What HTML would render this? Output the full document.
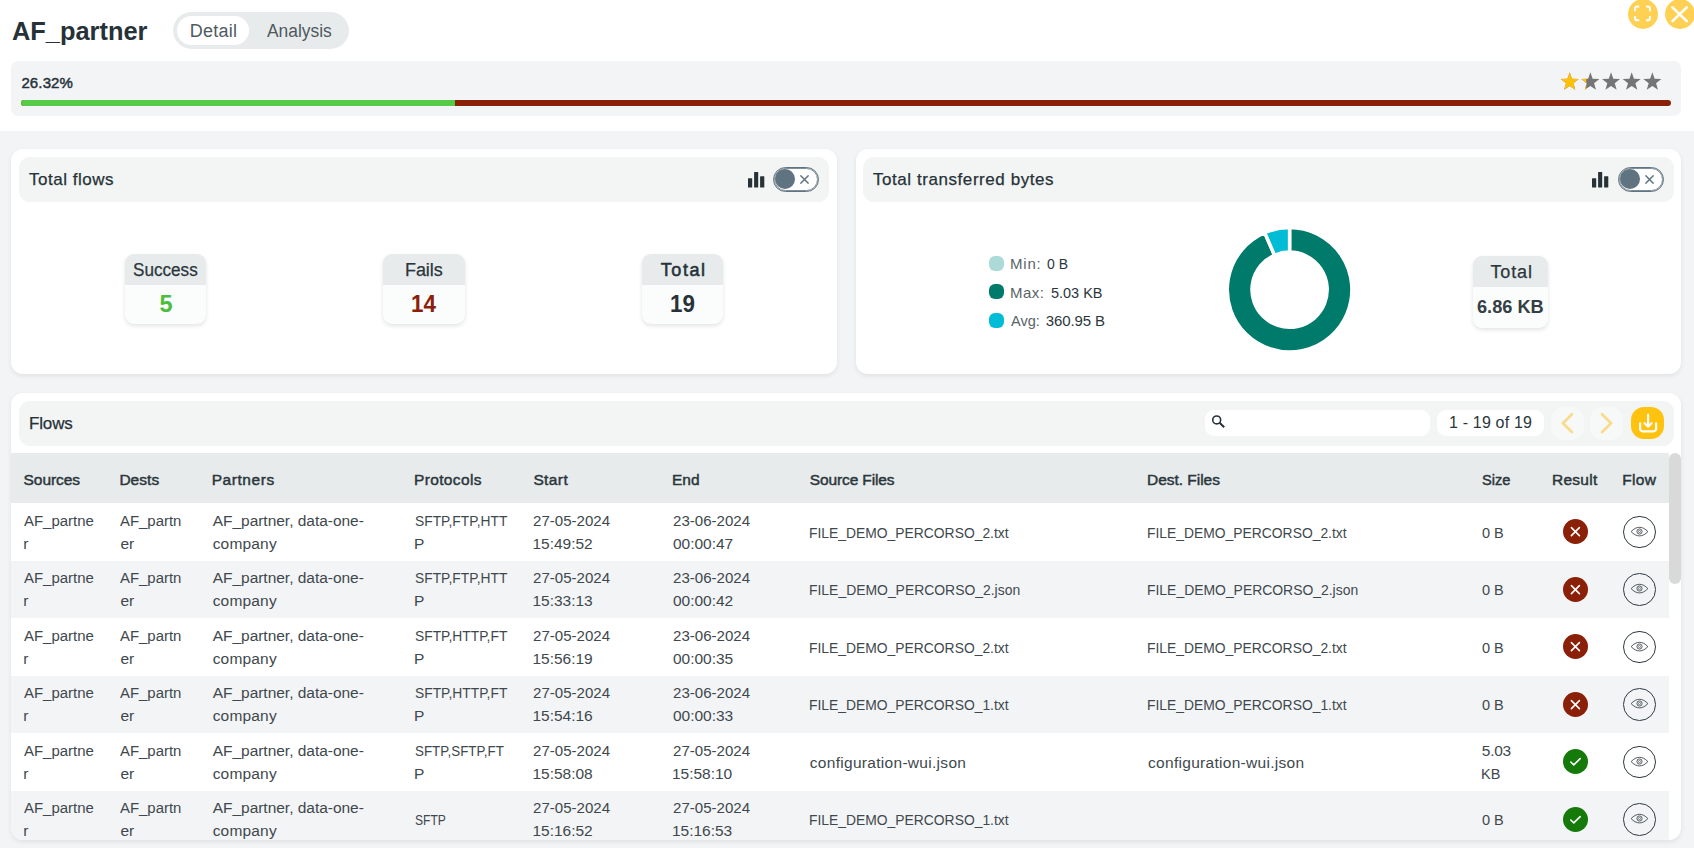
<!DOCTYPE html>
<html><head><meta charset="utf-8">
<style>
*{box-sizing:border-box;margin:0;padding:0}
html,body{width:1694px;height:848px;overflow:hidden;background:#fff}
body{font-family:"Liberation Sans",sans-serif;color:#2b363b;position:relative}
.abs{position:absolute}
.t{position:absolute;white-space:pre;line-height:1}
.card{position:absolute;background:#fff;border-radius:12px;box-shadow:0 2px 5px rgba(0,0,0,.08)}
.chead{position:absolute;background:#f3f4f4;border-radius:11px}
.stat{position:absolute;border-radius:9px;overflow:hidden;background:#fbfcfc;box-shadow:0 2px 4px rgba(0,0,0,.11)}
.stat .h{position:absolute;left:0;top:0;right:0;height:31px;background:#e8ebec}
</style></head>
<body>
<div class="abs" style="left:173px;top:12px;width:176px;height:37px;border-radius:19px;background:#e8ebec"></div>
<div class="abs" style="left:177px;top:16px;width:72px;height:29px;border-radius:15px;background:#fff"></div>
<div class="abs" style="left:1628px;top:-1.5px;width:30px;height:30px;border-radius:50%;background:#fed154"></div>
<svg class="abs" style="left:1628px;top:-1.5px" width="30" height="30" viewBox="0 0 30 30"><g fill="none" stroke="#fff" stroke-width="2" stroke-linecap="butt">
<path d="M7.07 12.2V9.46A2 2 0 0 1 9.07 7.46H11.2"/><path d="M18.1 7.46H19.93A2 2 0 0 1 21.93 9.46V12.2"/><path d="M21.93 17.1V19.3A2 2 0 0 1 19.93 21.3H18.1"/><path d="M11.2 21.3H9.07A2 2 0 0 1 7.07 19.3V17.1"/></g></svg>
<div class="abs" style="left:1665px;top:-1.5px;width:30px;height:30px;border-radius:50%;background:#fed154"></div>
<svg class="abs" style="left:1665px;top:-1.5px" width="30" height="30" viewBox="0 0 30 30"><g stroke="#fff" stroke-width="2.6" stroke-linecap="round"><path d="M7.44 8.4L21.75 22.1M21.75 8.4L7.44 22.1"/></g></svg>
<div class="abs" style="left:11px;top:61px;width:1670px;height:55px;border-radius:7px;background:#f3f4f6"></div>
<div class="abs" style="left:20px;top:99px;width:1652px;height:8px;border-radius:4px;background:#f8f9fa"></div>
<div class="abs" style="left:21px;top:100px;width:1650px;height:6px;border-radius:3px;background:#8b2009;overflow:hidden"><div style="width:434px;height:6px;background:#55cb48"></div></div>
<svg class="abs" style="left:1560px;top:72px;overflow:visible" width="105" height="19" viewBox="0 0 105 19"><defs><clipPath id="half"><rect x="0" y="0" width="4.9" height="19"/></clipPath></defs><g transform="translate(0.7 0.3)"><path transform="translate(0.00 0) scale(1.025 1.055)" d="M8.8 0 L11 6.1 L17.6 6.3 L12.4 10.3 L14.3 16.6 L8.8 12.9 L3.3 16.6 L5.2 10.3 L0 6.3 L6.6 6.1 Z" fill="#757575"/><path transform="translate(20.66 0) scale(1.025 1.055)" d="M8.8 0 L11 6.1 L17.6 6.3 L12.4 10.3 L14.3 16.6 L8.8 12.9 L3.3 16.6 L5.2 10.3 L0 6.3 L6.6 6.1 Z" fill="#757575"/><path transform="translate(41.32 0) scale(1.025 1.055)" d="M8.8 0 L11 6.1 L17.6 6.3 L12.4 10.3 L14.3 16.6 L8.8 12.9 L3.3 16.6 L5.2 10.3 L0 6.3 L6.6 6.1 Z" fill="#757575"/><path transform="translate(61.98 0) scale(1.025 1.055)" d="M8.8 0 L11 6.1 L17.6 6.3 L12.4 10.3 L14.3 16.6 L8.8 12.9 L3.3 16.6 L5.2 10.3 L0 6.3 L6.6 6.1 Z" fill="#757575"/><path transform="translate(82.64 0) scale(1.025 1.055)" d="M8.8 0 L11 6.1 L17.6 6.3 L12.4 10.3 L14.3 16.6 L8.8 12.9 L3.3 16.6 L5.2 10.3 L0 6.3 L6.6 6.1 Z" fill="#757575"/><path transform="scale(1.025 1.055)" d="M8.8 0 L11 6.1 L17.6 6.3 L12.4 10.3 L14.3 16.6 L8.8 12.9 L3.3 16.6 L5.2 10.3 L0 6.3 L6.6 6.1 Z" fill="#ffc107"/><g clip-path="url(#half)" transform="translate(20.66 0)"><path transform="scale(1.025 1.055)" d="M8.8 0 L11 6.1 L17.6 6.3 L12.4 10.3 L14.3 16.6 L8.8 12.9 L3.3 16.6 L5.2 10.3 L0 6.3 L6.6 6.1 Z" fill="#ffc107"/></g></g></svg>
<div class="abs" style="left:0;top:131px;width:1694px;height:717px;background:#f3f4f6"></div>
<div class="card" style="left:11px;top:149px;width:826px;height:225px"></div>
<div class="chead" style="left:19px;top:157px;width:810px;height:45px"></div>
<svg class="abs" style="left:748.1px;top:172px" width="17" height="16" viewBox="0 0 17 16"><g fill="#263238"><rect x="0" y="6.2" width="4.2" height="9.4" rx="0.5"/><rect x="6.1" y="0" width="4.1" height="15.6" rx="0.5"/><rect x="12.1" y="4.2" width="4.2" height="11.4" rx="0.5"/></g></svg>
<div class="abs" style="left:773px;top:167px;width:46px;height:25.3px;border-radius:13px;border:1px solid #5f7380;background:#fff"></div>
<div class="abs" style="left:774.4px;top:167.9px;width:43.2px;height:23.5px;border-radius:12px;border:1px solid rgba(95,115,128,.8)"></div>
<div class="abs" style="left:775.1px;top:169.1px;width:19.8px;height:19.8px;border-radius:50%;background:#5f7380"></div>
<svg class="abs" style="left:800px;top:175px" width="9" height="9" viewBox="0 0 9 9"><path d="M0.4 0.4L8.6 8.6M8.6 0.4L0.4 8.6" stroke="#5f7380" stroke-width="1.5"/></svg>
<div class="card" style="left:856px;top:149px;width:825px;height:225px"></div>
<div class="chead" style="left:863px;top:157px;width:811px;height:45px"></div>
<svg class="abs" style="left:1592.1px;top:172px" width="17" height="16" viewBox="0 0 17 16"><g fill="#263238"><rect x="0" y="6.2" width="4.2" height="9.4" rx="0.5"/><rect x="6.1" y="0" width="4.1" height="15.6" rx="0.5"/><rect x="12.1" y="4.2" width="4.2" height="11.4" rx="0.5"/></g></svg>
<div class="abs" style="left:1618px;top:167px;width:46px;height:25.3px;border-radius:13px;border:1px solid #5f7380;background:#fff"></div>
<div class="abs" style="left:1619.4px;top:167.9px;width:43.2px;height:23.5px;border-radius:12px;border:1px solid rgba(95,115,128,.8)"></div>
<div class="abs" style="left:1620.1px;top:169.1px;width:19.8px;height:19.8px;border-radius:50%;background:#5f7380"></div>
<svg class="abs" style="left:1645px;top:175px" width="9" height="9" viewBox="0 0 9 9"><path d="M0.4 0.4L8.6 8.6M8.6 0.4L0.4 8.6" stroke="#5f7380" stroke-width="1.5"/></svg>
<div class="stat" style="left:125px;top:254px;width:81px;height:70px"><div class="h"></div></div>
<div class="stat" style="left:383px;top:254px;width:82px;height:70px"><div class="h"></div></div>
<div class="stat" style="left:642px;top:254px;width:81px;height:70px"><div class="h"></div></div>
<div class="abs" style="left:989px;top:255.9px;width:15px;height:15px;border-radius:6px;background:#abdad8"></div>
<div class="abs" style="left:989px;top:283.9px;width:15px;height:15px;border-radius:6px;background:#007a6a"></div>
<div class="abs" style="left:989px;top:312.9px;width:15px;height:15px;border-radius:6px;background:#00bcd4"></div>
<svg class="abs" style="left:1160px;top:220px" width="260" height="140" viewBox="0 0 260 140"><path d="M129.60 7.40A62.3 62.3 0 1 1 104.66 12.61L114.55 35.24A37.6 37.6 0 1 0 129.60 32.10Z" fill="#007a6a" stroke="#fff" stroke-width="3.5" stroke-linejoin="miter"/><path d="M104.66 12.61A62.3 62.3 0 0 1 129.60 7.40L129.60 32.10A37.6 37.6 0 0 0 114.55 35.24Z" fill="#00bcd4" stroke="#fff" stroke-width="3.5" stroke-linejoin="miter"/></svg>
<div class="stat" style="left:1473px;top:256px;width:75px;height:72px"><div class="h"></div></div>
<div class="card" style="left:11px;top:393px;width:1670px;height:447px;overflow:hidden">
<div class="chead" style="left:8px;top:8px;width:1655px;height:45px"></div>
</div>
<div class="abs" style="left:1205px;top:410px;width:225px;height:26px;border-radius:9px;background:#fff"></div>
<svg class="abs" style="left:1211px;top:414px" width="16" height="16" viewBox="0 0 16 16"><circle cx="5.7" cy="5.9" r="3.95" fill="none" stroke="#263238" stroke-width="1.6"/><path d="M8.6 8.8L13.2 13.2" stroke="#263238" stroke-width="2" stroke-linecap="butt"/></svg>
<div class="abs" style="left:1437px;top:410px;width:107px;height:26px;border-radius:9px;background:#fff"></div>
<div class="abs" style="left:1551px;top:407px;width:33px;height:33px;border-radius:13px;background:#f7f8f8"></div>
<div class="abs" style="left:1590px;top:407px;width:33px;height:33px;border-radius:13px;background:#f7f8f8"></div>
<svg class="abs" style="left:1551px;top:407px" width="33" height="33" viewBox="0 0 33 33"><path d="M20.9 7.3L11.9 16.2L20.9 25.1" fill="none" stroke="#f8dc8d" stroke-width="2.8" stroke-linecap="round" stroke-linejoin="round"/></svg>
<svg class="abs" style="left:1590px;top:407px" width="33" height="33" viewBox="0 0 33 33"><path d="M12.1 7.3L21.1 16.2L12.1 25.1" fill="none" stroke="#f8dc8d" stroke-width="2.8" stroke-linecap="round" stroke-linejoin="round"/></svg>
<div class="abs" style="left:1631px;top:407px;width:33px;height:32px;border-radius:13px;background:#fec20f"></div>
<svg class="abs" style="left:1631px;top:407px" width="33" height="32" viewBox="0 0 33 32"><g fill="none" stroke="#fff" stroke-width="2.2" stroke-linecap="round" stroke-linejoin="round"><path d="M17.1 7.7V19.3M13.6 16.2L17.1 19.7L20.6 16.2"/><path d="M9.1 16.3V21.8A2.5 2.5 0 0 0 11.6 24.3H22.6A2.5 2.5 0 0 0 25.1 21.8V16.3"/></g></svg>
<div class="abs" style="left:11px;top:452.5px;width:1658px;height:50.5px;background:#e8ebec"></div>
<div class="abs" style="left:11px;top:503px;width:1658px;height:337px;overflow:hidden;border-bottom-left-radius:12px">
<div class="abs" style="left:0;top:0.0px;width:1658px;height:57.5px;background:#fff"></div>
<div class="abs" style="left:0;top:57.5px;width:1658px;height:57.5px;background:#f3f4f6"></div>
<div class="abs" style="left:0;top:115.0px;width:1658px;height:57.5px;background:#fff"></div>
<div class="abs" style="left:0;top:172.5px;width:1658px;height:57.5px;background:#f3f4f6"></div>
<div class="abs" style="left:0;top:230.0px;width:1658px;height:57.5px;background:#fff"></div>
<div class="abs" style="left:0;top:287.5px;width:1658px;height:57.5px;background:#f3f4f6"></div>
</div>
<div class="abs" style="left:11px;top:503px;width:1670px;height:337px;overflow:hidden" id="rowclip">
</div>
<div class="abs" style="left:1563px;top:519.3px;width:25px;height:25px;border-radius:50%;background:#8b2009"></div>
<svg class="abs" style="left:1563px;top:519.3px" width="25" height="25" viewBox="0 0 25 25"><path d="M8.4 8.6L16.4 16.6M16.4 8.6L8.4 16.6" stroke="#fff" stroke-width="1.6" stroke-linecap="round"/></svg>
<div class="abs" style="left:1623.2px;top:515.9px;width:32.6px;height:32.6px;border-radius:50%;border:1.1px solid #2f3a3f"></div>
<svg class="abs" style="left:1623px;top:515.6px" width="33" height="33" viewBox="0 0 33 33"><path d="M8.1 15.6C10.9 12.7 13.6 11.3 16.5 11.3S22.1 12.7 24.9 15.6C22.1 18.5 19.4 19.9 16.5 19.9S10.9 18.5 8.1 15.6Z" fill="none" stroke="#2f3a3f" stroke-width="0.85"/><circle cx="16.5" cy="15.5" r="2.6" fill="none" stroke="#2f3a3f" stroke-width="0.8"/><circle cx="16.5" cy="15.5" r="1.1" fill="none" stroke="#2f3a3f" stroke-width="0.6"/></svg>
<div class="abs" style="left:1563px;top:576.8px;width:25px;height:25px;border-radius:50%;background:#8b2009"></div>
<svg class="abs" style="left:1563px;top:576.8px" width="25" height="25" viewBox="0 0 25 25"><path d="M8.4 8.6L16.4 16.6M16.4 8.6L8.4 16.6" stroke="#fff" stroke-width="1.6" stroke-linecap="round"/></svg>
<div class="abs" style="left:1623.2px;top:573.4px;width:32.6px;height:32.6px;border-radius:50%;border:1.1px solid #2f3a3f"></div>
<svg class="abs" style="left:1623px;top:573.1px" width="33" height="33" viewBox="0 0 33 33"><path d="M8.1 15.6C10.9 12.7 13.6 11.3 16.5 11.3S22.1 12.7 24.9 15.6C22.1 18.5 19.4 19.9 16.5 19.9S10.9 18.5 8.1 15.6Z" fill="none" stroke="#2f3a3f" stroke-width="0.85"/><circle cx="16.5" cy="15.5" r="2.6" fill="none" stroke="#2f3a3f" stroke-width="0.8"/><circle cx="16.5" cy="15.5" r="1.1" fill="none" stroke="#2f3a3f" stroke-width="0.6"/></svg>
<div class="abs" style="left:1563px;top:634.3px;width:25px;height:25px;border-radius:50%;background:#8b2009"></div>
<svg class="abs" style="left:1563px;top:634.3px" width="25" height="25" viewBox="0 0 25 25"><path d="M8.4 8.6L16.4 16.6M16.4 8.6L8.4 16.6" stroke="#fff" stroke-width="1.6" stroke-linecap="round"/></svg>
<div class="abs" style="left:1623.2px;top:630.9px;width:32.6px;height:32.6px;border-radius:50%;border:1.1px solid #2f3a3f"></div>
<svg class="abs" style="left:1623px;top:630.6px" width="33" height="33" viewBox="0 0 33 33"><path d="M8.1 15.6C10.9 12.7 13.6 11.3 16.5 11.3S22.1 12.7 24.9 15.6C22.1 18.5 19.4 19.9 16.5 19.9S10.9 18.5 8.1 15.6Z" fill="none" stroke="#2f3a3f" stroke-width="0.85"/><circle cx="16.5" cy="15.5" r="2.6" fill="none" stroke="#2f3a3f" stroke-width="0.8"/><circle cx="16.5" cy="15.5" r="1.1" fill="none" stroke="#2f3a3f" stroke-width="0.6"/></svg>
<div class="abs" style="left:1563px;top:691.8px;width:25px;height:25px;border-radius:50%;background:#8b2009"></div>
<svg class="abs" style="left:1563px;top:691.8px" width="25" height="25" viewBox="0 0 25 25"><path d="M8.4 8.6L16.4 16.6M16.4 8.6L8.4 16.6" stroke="#fff" stroke-width="1.6" stroke-linecap="round"/></svg>
<div class="abs" style="left:1623.2px;top:688.4px;width:32.6px;height:32.6px;border-radius:50%;border:1.1px solid #2f3a3f"></div>
<svg class="abs" style="left:1623px;top:688.1px" width="33" height="33" viewBox="0 0 33 33"><path d="M8.1 15.6C10.9 12.7 13.6 11.3 16.5 11.3S22.1 12.7 24.9 15.6C22.1 18.5 19.4 19.9 16.5 19.9S10.9 18.5 8.1 15.6Z" fill="none" stroke="#2f3a3f" stroke-width="0.85"/><circle cx="16.5" cy="15.5" r="2.6" fill="none" stroke="#2f3a3f" stroke-width="0.8"/><circle cx="16.5" cy="15.5" r="1.1" fill="none" stroke="#2f3a3f" stroke-width="0.6"/></svg>
<div class="abs" style="left:1563px;top:749.3px;width:25px;height:25px;border-radius:50%;background:#167a0b"></div>
<svg class="abs" style="left:1563px;top:749.3px" width="25" height="25" viewBox="0 0 25 25"><path d="M7.8 13L10.8 15.9L17.2 9.6" fill="none" stroke="#fff" stroke-width="1.6" stroke-linecap="round" stroke-linejoin="round"/></svg>
<div class="abs" style="left:1623.2px;top:745.9px;width:32.6px;height:32.6px;border-radius:50%;border:1.1px solid #2f3a3f"></div>
<svg class="abs" style="left:1623px;top:745.6px" width="33" height="33" viewBox="0 0 33 33"><path d="M8.1 15.6C10.9 12.7 13.6 11.3 16.5 11.3S22.1 12.7 24.9 15.6C22.1 18.5 19.4 19.9 16.5 19.9S10.9 18.5 8.1 15.6Z" fill="none" stroke="#2f3a3f" stroke-width="0.85"/><circle cx="16.5" cy="15.5" r="2.6" fill="none" stroke="#2f3a3f" stroke-width="0.8"/><circle cx="16.5" cy="15.5" r="1.1" fill="none" stroke="#2f3a3f" stroke-width="0.6"/></svg>
<div class="abs" style="left:1563px;top:806.8px;width:25px;height:25px;border-radius:50%;background:#167a0b"></div>
<svg class="abs" style="left:1563px;top:806.8px" width="25" height="25" viewBox="0 0 25 25"><path d="M7.8 13L10.8 15.9L17.2 9.6" fill="none" stroke="#fff" stroke-width="1.6" stroke-linecap="round" stroke-linejoin="round"/></svg>
<div class="abs" style="left:1623.2px;top:803.4px;width:32.6px;height:32.6px;border-radius:50%;border:1.1px solid #2f3a3f"></div>
<svg class="abs" style="left:1623px;top:803.1px" width="33" height="33" viewBox="0 0 33 33"><path d="M8.1 15.6C10.9 12.7 13.6 11.3 16.5 11.3S22.1 12.7 24.9 15.6C22.1 18.5 19.4 19.9 16.5 19.9S10.9 18.5 8.1 15.6Z" fill="none" stroke="#2f3a3f" stroke-width="0.85"/><circle cx="16.5" cy="15.5" r="2.6" fill="none" stroke="#2f3a3f" stroke-width="0.8"/><circle cx="16.5" cy="15.5" r="1.1" fill="none" stroke="#2f3a3f" stroke-width="0.6"/></svg>
<div class="abs" style="left:1669px;top:453px;width:11.8px;height:130.5px;border-radius:6px;background:#d9d9d9"></div>
<div class="t" style="left:11.70px;top:17.99px;font-size:26px;color:#263238;font-weight:700;transform:scaleX(0.9763);transform-origin:0 0">AF_partner</div>
<div class="t" style="left:189.70px;top:21.66px;font-size:18px;color:#4f5a5f;letter-spacing:0.236px">Detail</div>
<div class="t" style="left:267.20px;top:21.66px;font-size:18px;color:#4f5a5f;transform:scaleX(0.9668);transform-origin:0 0">Analysis</div>
<div class="t" style="left:21.40px;top:75.30px;font-size:15px;color:#263238;-webkit-text-stroke:0.45px #263238;letter-spacing:0.133px">26.32%</div>
<div class="t" style="left:29.00px;top:171.11px;font-size:17px;color:#263238;-webkit-text-stroke:0.25px #263238;letter-spacing:0.514px">Total flows</div>
<div class="t" style="left:873.00px;top:171.01px;font-size:17px;color:#263238;-webkit-text-stroke:0.25px #263238;letter-spacing:0.560px">Total transferred bytes</div>
<div class="t" style="left:133.30px;top:260.56px;font-size:18px;color:#2b363b;-webkit-text-stroke:0.25px #2b363b;transform:scaleX(0.9511);transform-origin:0 0">Success</div>
<div class="t" style="left:159.60px;top:292.51px;font-size:23.5px;color:#4cbe3f;font-weight:700">5</div>
<div class="t" style="left:405.00px;top:260.56px;font-size:18px;color:#2b363b;-webkit-text-stroke:0.25px #2b363b;letter-spacing:-0.076px">Fails</div>
<div class="t" style="left:411.47px;top:292.08px;font-size:24px;color:#8b2009;font-weight:700;transform:scaleX(0.9337);transform-origin:0 0">14</div>
<div class="t" style="left:660.80px;top:260.56px;font-size:18px;color:#263238;-webkit-text-stroke:0.54px #263238;letter-spacing:1.569px">Total</div>
<div class="t" style="left:670.47px;top:292.08px;font-size:24px;color:#263238;font-weight:700;transform:scaleX(0.9311);transform-origin:0 0">19</div>
<div class="t" style="left:1010.00px;top:256.30px;font-size:15px;color:#5a6469;letter-spacing:0.777px">Min:</div>
<div class="t" style="left:1047.00px;top:256.30px;font-size:15px;color:#2b363b;transform:scaleX(0.9329);transform-origin:0 0">0 B</div>
<div class="t" style="left:1010.00px;top:285.10px;font-size:15px;color:#5a6469;letter-spacing:0.488px">Max:</div>
<div class="t" style="left:1050.50px;top:285.10px;font-size:15px;color:#2b363b;transform:scaleX(0.9650);transform-origin:0 0">5.03 KB</div>
<div class="t" style="left:1011.00px;top:312.80px;font-size:15px;color:#5a6469;transform:scaleX(0.9693);transform-origin:0 0">Avg:</div>
<div class="t" style="left:1045.80px;top:312.80px;font-size:15px;color:#2b363b;letter-spacing:-0.121px">360.95 B</div>
<div class="t" style="left:1490.50px;top:262.76px;font-size:18px;color:#2b363b;-webkit-text-stroke:0.25px #2b363b;letter-spacing:0.869px">Total</div>
<div class="t" style="left:1477.40px;top:297.42px;font-size:19px;color:#343f44;font-weight:700;transform:scaleX(0.9568);transform-origin:0 0">6.86 KB</div>
<div class="t" style="left:28.90px;top:415.01px;font-size:17px;color:#263238;-webkit-text-stroke:0.25px #263238;letter-spacing:-0.123px">Flows</div>
<div class="t" style="left:1449.00px;top:414.96px;font-size:16px;color:#2b363b;letter-spacing:0.178px">1 - 19 of 19</div>
<div class="t" style="left:23.60px;top:471.88px;font-size:15.5px;color:#2b363b;-webkit-text-stroke:0.46px #2b363b;letter-spacing:-0.069px">Sources</div>
<div class="t" style="left:119.40px;top:471.88px;font-size:15.5px;color:#2b363b;-webkit-text-stroke:0.46px #2b363b;letter-spacing:0.032px">Dests</div>
<div class="t" style="left:211.70px;top:471.88px;font-size:15.5px;color:#2b363b;-webkit-text-stroke:0.46px #2b363b;letter-spacing:0.553px">Partners</div>
<div class="t" style="left:414.00px;top:471.88px;font-size:15.5px;color:#2b363b;-webkit-text-stroke:0.46px #2b363b;letter-spacing:0.355px">Protocols</div>
<div class="t" style="left:533.40px;top:471.88px;font-size:15.5px;color:#2b363b;-webkit-text-stroke:0.46px #2b363b;letter-spacing:0.393px">Start</div>
<div class="t" style="left:671.90px;top:471.88px;font-size:15.5px;color:#2b363b;-webkit-text-stroke:0.46px #2b363b;letter-spacing:0.021px">End</div>
<div class="t" style="left:809.80px;top:471.88px;font-size:15.5px;color:#2b363b;-webkit-text-stroke:0.46px #2b363b;letter-spacing:-0.127px">Source Files</div>
<div class="t" style="left:1147.00px;top:471.88px;font-size:15.5px;color:#2b363b;-webkit-text-stroke:0.46px #2b363b;letter-spacing:-0.026px">Dest. Files</div>
<div class="t" style="left:1481.80px;top:471.88px;font-size:15.5px;color:#2b363b;-webkit-text-stroke:0.46px #2b363b;transform:scaleX(0.9447);transform-origin:0 0">Size</div>
<div class="t" style="left:1552.00px;top:471.88px;font-size:15.5px;color:#2b363b;-webkit-text-stroke:0.46px #2b363b;letter-spacing:0.254px">Result</div>
<div class="t" style="left:1622.30px;top:471.88px;font-size:15.5px;color:#2b363b;-webkit-text-stroke:0.46px #2b363b;letter-spacing:0.289px">Flow</div>
<div class="t" style="left:23.60px;top:512.98px;font-size:15.5px;color:#3e484d;transform:scaleX(0.9644);transform-origin:0 0">AF_partne</div>
<div class="t" style="left:23.30px;top:535.98px;font-size:15.5px;color:#3e484d">r</div>
<div class="t" style="left:120.40px;top:512.98px;font-size:15.5px;color:#3e484d;transform:scaleX(0.9630);transform-origin:0 0">AF_partn</div>
<div class="t" style="left:120.40px;top:535.98px;font-size:15.5px;color:#3e484d">er</div>
<div class="t" style="left:212.70px;top:512.98px;font-size:15.5px;color:#3e484d;letter-spacing:-0.024px">AF_partner, data-one-</div>
<div class="t" style="left:212.70px;top:535.98px;font-size:15.5px;color:#3e484d;letter-spacing:0.176px">company</div>
<div class="t" style="left:415.00px;top:512.98px;font-size:15.5px;color:#3e484d;transform:scaleX(0.8909);transform-origin:0 0">SFTP,FTP,HTT</div>
<div class="t" style="left:414.00px;top:535.98px;font-size:15.5px;color:#3e484d">P</div>
<div class="t" style="left:533.40px;top:512.98px;font-size:15.5px;color:#3e484d;transform:scaleX(0.9716);transform-origin:0 0">27-05-2024</div>
<div class="t" style="left:532.40px;top:535.98px;font-size:15.5px;color:#3e484d">15:49:52</div>
<div class="t" style="left:672.90px;top:512.98px;font-size:15.5px;color:#3e484d;transform:scaleX(0.9716);transform-origin:0 0">23-06-2024</div>
<div class="t" style="left:672.90px;top:535.98px;font-size:15.5px;color:#3e484d">00:00:47</div>
<div class="t" style="left:808.91px;top:524.68px;font-size:15.5px;color:#3e484d;transform:scaleX(0.8946);transform-origin:0 0">FILE_DEMO_PERCORSO_2.txt</div>
<div class="t" style="left:1147.11px;top:524.68px;font-size:15.5px;color:#3e484d;transform:scaleX(0.8946);transform-origin:0 0">FILE_DEMO_PERCORSO_2.txt</div>
<div class="t" style="left:1482.40px;top:524.68px;font-size:15.5px;color:#3e484d;transform:scaleX(0.9378);transform-origin:0 0">0 B</div>
<div class="t" style="left:23.60px;top:570.48px;font-size:15.5px;color:#3e484d;transform:scaleX(0.9644);transform-origin:0 0">AF_partne</div>
<div class="t" style="left:23.30px;top:593.48px;font-size:15.5px;color:#3e484d">r</div>
<div class="t" style="left:120.40px;top:570.48px;font-size:15.5px;color:#3e484d;transform:scaleX(0.9630);transform-origin:0 0">AF_partn</div>
<div class="t" style="left:120.40px;top:593.48px;font-size:15.5px;color:#3e484d">er</div>
<div class="t" style="left:212.70px;top:570.48px;font-size:15.5px;color:#3e484d;letter-spacing:-0.024px">AF_partner, data-one-</div>
<div class="t" style="left:212.70px;top:593.48px;font-size:15.5px;color:#3e484d;letter-spacing:0.176px">company</div>
<div class="t" style="left:415.00px;top:570.48px;font-size:15.5px;color:#3e484d;transform:scaleX(0.8909);transform-origin:0 0">SFTP,FTP,HTT</div>
<div class="t" style="left:414.00px;top:593.48px;font-size:15.5px;color:#3e484d">P</div>
<div class="t" style="left:533.40px;top:570.48px;font-size:15.5px;color:#3e484d;transform:scaleX(0.9716);transform-origin:0 0">27-05-2024</div>
<div class="t" style="left:532.40px;top:593.48px;font-size:15.5px;color:#3e484d">15:33:13</div>
<div class="t" style="left:672.90px;top:570.48px;font-size:15.5px;color:#3e484d;transform:scaleX(0.9716);transform-origin:0 0">23-06-2024</div>
<div class="t" style="left:672.90px;top:593.48px;font-size:15.5px;color:#3e484d">00:00:42</div>
<div class="t" style="left:808.90px;top:582.18px;font-size:15.5px;color:#3e484d;transform:scaleX(0.8979);transform-origin:0 0">FILE_DEMO_PERCORSO_2.json</div>
<div class="t" style="left:1147.10px;top:582.18px;font-size:15.5px;color:#3e484d;transform:scaleX(0.8979);transform-origin:0 0">FILE_DEMO_PERCORSO_2.json</div>
<div class="t" style="left:1482.40px;top:582.18px;font-size:15.5px;color:#3e484d;transform:scaleX(0.9378);transform-origin:0 0">0 B</div>
<div class="t" style="left:23.60px;top:627.98px;font-size:15.5px;color:#3e484d;transform:scaleX(0.9644);transform-origin:0 0">AF_partne</div>
<div class="t" style="left:23.30px;top:650.98px;font-size:15.5px;color:#3e484d">r</div>
<div class="t" style="left:120.40px;top:627.98px;font-size:15.5px;color:#3e484d;transform:scaleX(0.9630);transform-origin:0 0">AF_partn</div>
<div class="t" style="left:120.40px;top:650.98px;font-size:15.5px;color:#3e484d">er</div>
<div class="t" style="left:212.70px;top:627.98px;font-size:15.5px;color:#3e484d;letter-spacing:-0.024px">AF_partner, data-one-</div>
<div class="t" style="left:212.70px;top:650.98px;font-size:15.5px;color:#3e484d;letter-spacing:0.176px">company</div>
<div class="t" style="left:415.00px;top:627.98px;font-size:15.5px;color:#3e484d;transform:scaleX(0.8909);transform-origin:0 0">SFTP,HTTP,FT</div>
<div class="t" style="left:414.00px;top:650.98px;font-size:15.5px;color:#3e484d">P</div>
<div class="t" style="left:533.40px;top:627.98px;font-size:15.5px;color:#3e484d;transform:scaleX(0.9716);transform-origin:0 0">27-05-2024</div>
<div class="t" style="left:532.40px;top:650.98px;font-size:15.5px;color:#3e484d">15:56:19</div>
<div class="t" style="left:672.90px;top:627.98px;font-size:15.5px;color:#3e484d;transform:scaleX(0.9716);transform-origin:0 0">23-06-2024</div>
<div class="t" style="left:672.90px;top:650.98px;font-size:15.5px;color:#3e484d">00:00:35</div>
<div class="t" style="left:808.91px;top:639.68px;font-size:15.5px;color:#3e484d;transform:scaleX(0.8946);transform-origin:0 0">FILE_DEMO_PERCORSO_2.txt</div>
<div class="t" style="left:1147.11px;top:639.68px;font-size:15.5px;color:#3e484d;transform:scaleX(0.8946);transform-origin:0 0">FILE_DEMO_PERCORSO_2.txt</div>
<div class="t" style="left:1482.40px;top:639.68px;font-size:15.5px;color:#3e484d;transform:scaleX(0.9378);transform-origin:0 0">0 B</div>
<div class="t" style="left:23.60px;top:685.48px;font-size:15.5px;color:#3e484d;transform:scaleX(0.9644);transform-origin:0 0">AF_partne</div>
<div class="t" style="left:23.30px;top:708.48px;font-size:15.5px;color:#3e484d">r</div>
<div class="t" style="left:120.40px;top:685.48px;font-size:15.5px;color:#3e484d;transform:scaleX(0.9630);transform-origin:0 0">AF_partn</div>
<div class="t" style="left:120.40px;top:708.48px;font-size:15.5px;color:#3e484d">er</div>
<div class="t" style="left:212.70px;top:685.48px;font-size:15.5px;color:#3e484d;letter-spacing:-0.024px">AF_partner, data-one-</div>
<div class="t" style="left:212.70px;top:708.48px;font-size:15.5px;color:#3e484d;letter-spacing:0.176px">company</div>
<div class="t" style="left:415.00px;top:685.48px;font-size:15.5px;color:#3e484d;transform:scaleX(0.8909);transform-origin:0 0">SFTP,HTTP,FT</div>
<div class="t" style="left:414.00px;top:708.48px;font-size:15.5px;color:#3e484d">P</div>
<div class="t" style="left:533.40px;top:685.48px;font-size:15.5px;color:#3e484d;transform:scaleX(0.9716);transform-origin:0 0">27-05-2024</div>
<div class="t" style="left:532.40px;top:708.48px;font-size:15.5px;color:#3e484d">15:54:16</div>
<div class="t" style="left:672.90px;top:685.48px;font-size:15.5px;color:#3e484d;transform:scaleX(0.9716);transform-origin:0 0">23-06-2024</div>
<div class="t" style="left:672.90px;top:708.48px;font-size:15.5px;color:#3e484d">00:00:33</div>
<div class="t" style="left:808.91px;top:697.18px;font-size:15.5px;color:#3e484d;transform:scaleX(0.8946);transform-origin:0 0">FILE_DEMO_PERCORSO_1.txt</div>
<div class="t" style="left:1147.11px;top:697.18px;font-size:15.5px;color:#3e484d;transform:scaleX(0.8946);transform-origin:0 0">FILE_DEMO_PERCORSO_1.txt</div>
<div class="t" style="left:1482.40px;top:697.18px;font-size:15.5px;color:#3e484d;transform:scaleX(0.9378);transform-origin:0 0">0 B</div>
<div class="t" style="left:23.60px;top:742.98px;font-size:15.5px;color:#3e484d;transform:scaleX(0.9644);transform-origin:0 0">AF_partne</div>
<div class="t" style="left:23.30px;top:765.98px;font-size:15.5px;color:#3e484d">r</div>
<div class="t" style="left:120.40px;top:742.98px;font-size:15.5px;color:#3e484d;transform:scaleX(0.9630);transform-origin:0 0">AF_partn</div>
<div class="t" style="left:120.40px;top:765.98px;font-size:15.5px;color:#3e484d">er</div>
<div class="t" style="left:212.70px;top:742.98px;font-size:15.5px;color:#3e484d;letter-spacing:-0.024px">AF_partner, data-one-</div>
<div class="t" style="left:212.70px;top:765.98px;font-size:15.5px;color:#3e484d;letter-spacing:0.176px">company</div>
<div class="t" style="left:415.00px;top:742.98px;font-size:15.5px;color:#3e484d;transform:scaleX(0.8644);transform-origin:0 0">SFTP,SFTP,FT</div>
<div class="t" style="left:414.00px;top:765.98px;font-size:15.5px;color:#3e484d">P</div>
<div class="t" style="left:533.40px;top:742.98px;font-size:15.5px;color:#3e484d;transform:scaleX(0.9716);transform-origin:0 0">27-05-2024</div>
<div class="t" style="left:532.40px;top:765.98px;font-size:15.5px;color:#3e484d">15:58:08</div>
<div class="t" style="left:672.90px;top:742.98px;font-size:15.5px;color:#3e484d;transform:scaleX(0.9716);transform-origin:0 0">27-05-2024</div>
<div class="t" style="left:671.90px;top:765.98px;font-size:15.5px;color:#3e484d">15:58:10</div>
<div class="t" style="left:809.80px;top:754.68px;font-size:15.5px;color:#3e484d;letter-spacing:0.296px">configuration-wui.json</div>
<div class="t" style="left:1148.00px;top:754.68px;font-size:15.5px;color:#3e484d;letter-spacing:0.296px">configuration-wui.json</div>
<div class="t" style="left:1481.80px;top:742.98px;font-size:15.5px;color:#3e484d;letter-spacing:-0.249px">5.03</div>
<div class="t" style="left:1480.86px;top:765.98px;font-size:15.5px;color:#3e484d;transform:scaleX(0.9360);transform-origin:0 0">KB</div>
<div class="t" style="left:23.60px;top:800.48px;font-size:15.5px;color:#3e484d;transform:scaleX(0.9644);transform-origin:0 0">AF_partne</div>
<div class="t" style="left:23.30px;top:823.48px;font-size:15.5px;color:#3e484d">r</div>
<div class="t" style="left:120.40px;top:800.48px;font-size:15.5px;color:#3e484d;transform:scaleX(0.9630);transform-origin:0 0">AF_partn</div>
<div class="t" style="left:120.40px;top:823.48px;font-size:15.5px;color:#3e484d">er</div>
<div class="t" style="left:212.70px;top:800.48px;font-size:15.5px;color:#3e484d;letter-spacing:-0.024px">AF_partner, data-one-</div>
<div class="t" style="left:212.70px;top:823.48px;font-size:15.5px;color:#3e484d;letter-spacing:0.176px">company</div>
<div class="t" style="left:415.00px;top:812.18px;font-size:15.5px;color:#3e484d;transform:scaleX(0.7791);transform-origin:0 0">SFTP</div>
<div class="t" style="left:533.40px;top:800.48px;font-size:15.5px;color:#3e484d;transform:scaleX(0.9716);transform-origin:0 0">27-05-2024</div>
<div class="t" style="left:532.40px;top:823.48px;font-size:15.5px;color:#3e484d">15:16:52</div>
<div class="t" style="left:672.90px;top:800.48px;font-size:15.5px;color:#3e484d;transform:scaleX(0.9716);transform-origin:0 0">27-05-2024</div>
<div class="t" style="left:671.90px;top:823.48px;font-size:15.5px;color:#3e484d">15:16:53</div>
<div class="t" style="left:808.91px;top:812.18px;font-size:15.5px;color:#3e484d;transform:scaleX(0.8946);transform-origin:0 0">FILE_DEMO_PERCORSO_1.txt</div>
<div class="t" style="left:1482.40px;top:812.18px;font-size:15.5px;color:#3e484d;transform:scaleX(0.9378);transform-origin:0 0">0 B</div>
</body></html>
